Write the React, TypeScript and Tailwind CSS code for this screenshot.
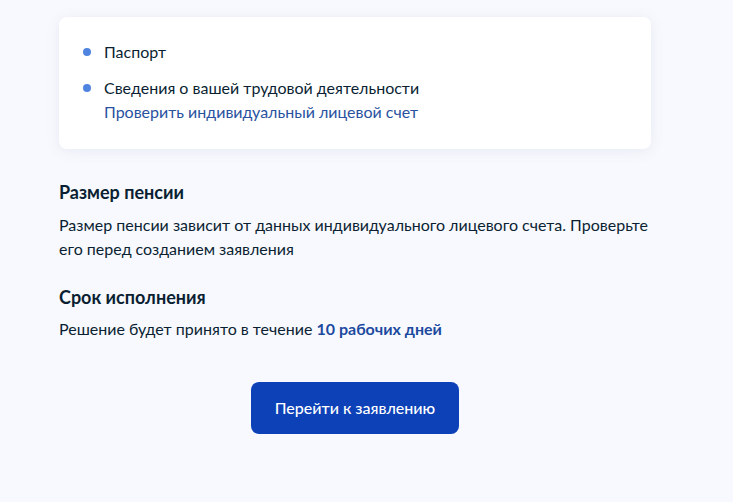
export default function App() {
  return (
    <div className="min-h-[502px] w-[733px] bg-[#f8f9fe] font-['Lato','Noto_Sans',sans-serif] text-[#0b1f33]">
      <div className="ml-[59px] w-[592px] pt-[17px]">
        <div className="rounded-lg bg-white pl-[24px] pr-[24px] pt-[23px] pb-[25px] shadow-[0_2px_14px_rgba(86,104,148,0.10)]">
          <ul className="flex flex-col gap-[12px] text-[16px] leading-[24px]">
            <li className="flex items-start gap-[13px]">
              <span className="mt-[8px] h-[8px] w-[8px] shrink-0 rounded-full bg-[#4f84e0]" />
              <span>Паспорт</span>
            </li>
            <li className="flex items-start gap-[13px]">
              <span className="mt-[8px] h-[8px] w-[8px] shrink-0 rounded-full bg-[#4f84e0]" />
              <div className="flex flex-col">
                <span>Сведения о вашей трудовой деятельности</span>
                <a className="text-[#2a52a0]">Проверить индивидуальный лицевой счет</a>
              </div>
            </li>
          </ul>
        </div>

        <h3 className="mt-[31px] text-[18px] font-bold leading-[24px]">Размер пенсии</h3>
        <p className="mt-[9px] text-[16px] leading-[24px]">
          Размер пенсии зависит от данных индивидуального лицевого счета. Проверьте его перед созданием заявления
        </p>

        <h3 className="mt-[24px] text-[18px] font-bold leading-[24px]">Срок исполнения</h3>
        <p className="mt-[8px] text-[16px] leading-[24px]">
          Решение будет принято в течение{" "}
          <span className="font-bold text-[#1d4a9e]">10 рабочих дней</span>
        </p>

        <div className="mt-[41px] flex justify-center">
          <button
            type="button"
            className="h-[52px] w-[208px] rounded-lg bg-[#0c41b8] text-[16px] font-medium text-white"
          >
            Перейти к заявлению
          </button>
        </div>
      </div>
    </div>
  );
}
